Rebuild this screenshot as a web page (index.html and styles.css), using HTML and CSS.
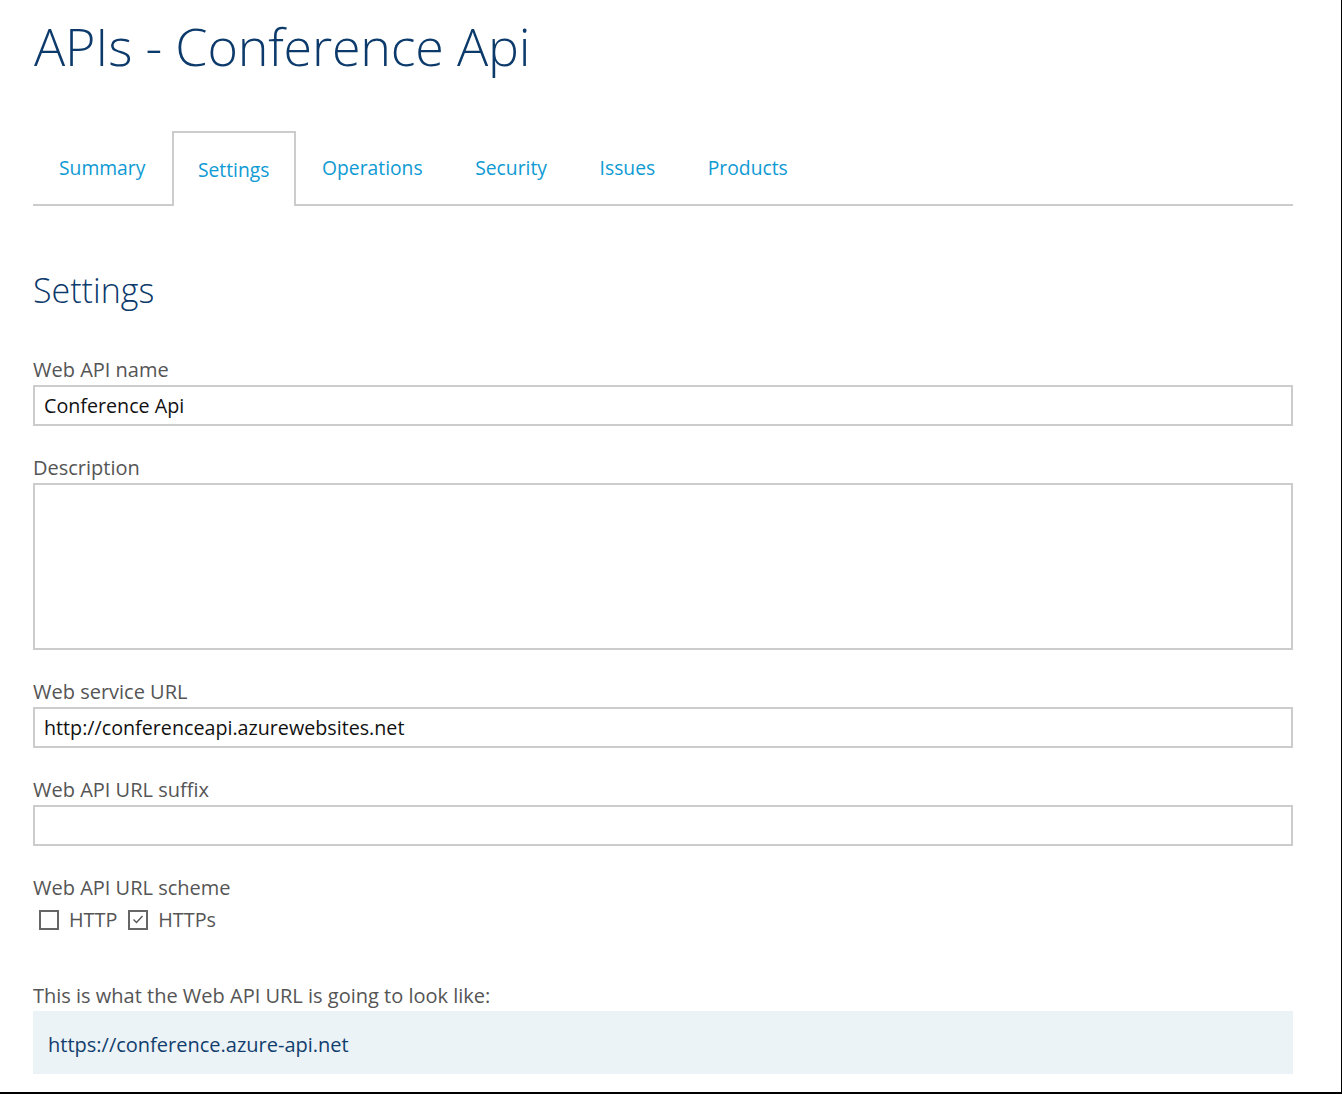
FILE: index.html
```html
<!DOCTYPE html>
<html lang="en">
<head>
<meta charset="utf-8">
<title>APIs - Conference Api</title>
<link rel="stylesheet" href="styles.css">
</head>
<body>
<div class="frame">
  <div class="page">
    <h1 class="title">APIs - Conference Api</h1>
    <ul class="tabs">
      <li class="tab">Summary</li>
      <li class="tab active">Settings</li>
      <li class="tab">Operations</li>
      <li class="tab">Security</li>
      <li class="tab">Issues</li>
      <li class="tab">Products</li>
    </ul>
    <h2 class="section">Settings</h2>
    <div class="fields">
      <div class="field">
        <label class="label">Web API name</label>
        <div class="input">Conference Api</div>
      </div>
      <div class="field">
        <label class="label">Description</label>
        <div class="input textarea"></div>
      </div>
      <div class="field">
        <label class="label">Web service URL</label>
        <div class="input">http://conferenceapi.azurewebsites.net</div>
      </div>
      <div class="field">
        <label class="label">Web API URL suffix</label>
        <div class="input"></div>
      </div>
      <div class="field">
        <label class="label">Web API URL scheme</label>
        <div class="checks">
          <span class="check"><span class="box"></span>HTTP</span>
          <span class="check"><span class="box"><svg width="14" height="14" viewBox="0 0 14 14"><path d="M2.5 6.5 L5.5 9.5 L11.5 3" fill="none" stroke="#555" stroke-width="1.4"/></svg></span>HTTPs</span>
        </div>
      </div>
    </div>
    <div class="preview">
      <div class="label">This is what the Web API URL is going to look like:</div>
      <div class="preview-box">https://conference.azure-api.net</div>
    </div>
  </div>
</div>
</body>
</html>
```

FILE: styles.css
```css
html, body {
  margin: 0;
  padding: 0;
  background: #fff;
}
body {
  font-family: "Open Sans", "Noto Sans", sans-serif;
}
.frame {
  width: 1341px;
  height: 1092px;
  border-right: 1px solid #000;
  border-bottom: 2px solid #000;
  overflow: hidden;
}
.page {
  padding-left: 33px;
  width: 1260px;
}
.title {
  margin: 0;
  padding-top: 12px;
  padding-left: 1px;
  font-weight: 300;
  font-size: 52px;
  line-height: 68px;
  letter-spacing: -0.2px;
  color: #0c3a6b;
}
.tabs {
  list-style: none;
  margin: 51px 0 0 0;
  padding: 0;
  display: flex;
  border-bottom: 2px solid #cccccc;
}
.tab {
  padding: 20px 24.6px 22px 24px;
  font-size: 19.3px;
  line-height: 29px;
  color: #0e9ad3;
  border: 2px solid transparent;
  border-bottom: none;
  margin-bottom: -2px;
}
.tab.active {
  border-color: #cccccc;
  background: #fff;
  padding-top: 22px;
  padding-bottom: 22px;
}
.section {
  margin: 62px 0 0 0;
  font-weight: 300;
  font-size: 34px;
  line-height: 44px;
  color: #0c3a6b;
}
.fields {
  margin-top: 44px;
  display: flex;
  flex-direction: column;
  gap: 28px;
}
.field {
  display: flex;
  flex-direction: column;
}
.label {
  display: block;
  font-size: 20px;
  line-height: 28px;
  margin-bottom: 1px;
  color: #555555;
}
.input {
  border: 2px solid #cccccc;
  height: 37px;
  padding: 0 9px;
  font-size: 19.7px;
  line-height: 37px;
  color: #111;
}
.textarea {
  height: 163px;
}
.checks {
  display: flex;
  gap: 11px;
  padding-left: 6px;
  margin-top: 3px;
  font-size: 19.8px;
  line-height: 28px;
  color: #555;
}
.check {
  display: flex;
  align-items: center;
  gap: 10px;
}
.box {
  width: 16px;
  height: 16px;
  border: 2px solid #666;
  display: flex;
  align-items: center;
  justify-content: center;
}
.preview {
  margin-top: 48px;
}
.preview-box {
  background: #ebf3f7;
  height: 63px;
  box-sizing: border-box;
  padding-top: 4px;
  padding-left: 15px;
  font-size: 20px;
  line-height: 59px;
  color: #123e6d;
}
```
